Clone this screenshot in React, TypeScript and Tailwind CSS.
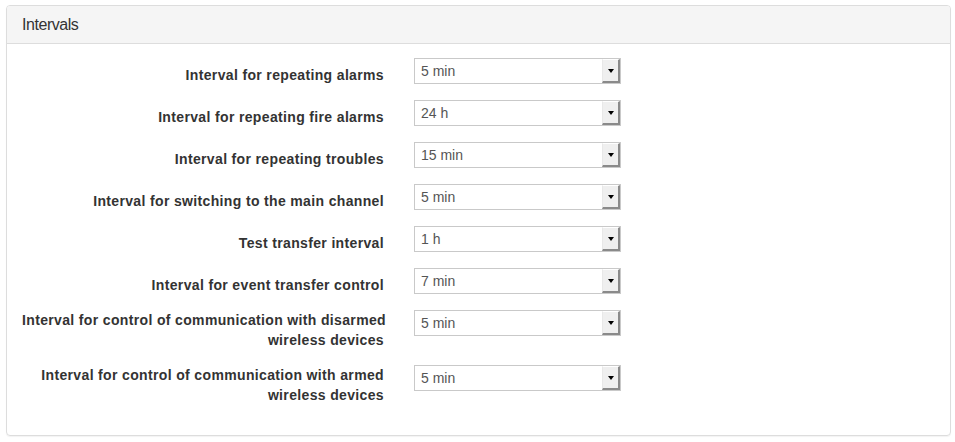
const rows = [
  { label: ["Interval for repeating alarms"], value: "5 min" },
  { label: ["Interval for repeating fire alarms"], value: "24 h" },
  { label: ["Interval for repeating troubles"], value: "15 min" },
  { label: ["Interval for switching to the main channel"], value: "5 min" },
  { label: ["Test transfer interval"], value: "1 h" },
  { label: ["Interval for event transfer control"], value: "7 min" },
  {
    label: ["Interval for control of communication with disarmed", "wireless devices"],
    value: "5 min",
  },
  {
    label: ["Interval for control of communication with armed", "wireless devices"],
    value: "5 min",
  },
];

function FakeSelect({ value }: { value: string }) {
  return (
    <div className="relative h-[26px] w-[207px] border border-[#c9c9c9] bg-white">
      <span className="block pl-[6px] text-[14px] leading-[24px] text-[#555]">{value}</span>
      <span className="absolute right-0 top-0 bottom-0 flex w-[18px] items-center justify-center border-t border-l border-t-white border-l-[#e8e8e8] border-r-2 border-b-2 border-r-[#8a8a8a] border-b-[#8a8a8a] bg-[#efefef]">
        <span className="h-0 w-0 border-x-[3.5px] border-t-[4px] border-x-transparent border-t-black" />
      </span>
    </div>
  );
}

export default function App() {
  return (
    <div className="min-h-[442px] bg-white pl-[6px] pr-[4px] pt-[5px] font-['Liberation_Sans',Arial,sans-serif] text-[#333]">
      <div className="rounded-[4px] border border-[#ddd] shadow-[0_1px_1px_rgba(0,0,0,0.05)]">
        <div className="rounded-t-[3px] border-b border-[#ddd] bg-[#f5f5f5] px-[15px] py-[10px]">
          <h3 className="text-[16px] leading-[17px] tracking-[-0.45px] text-[#333]">Intervals</h3>
        </div>
        <div className="px-[15px] pt-[14px] pb-[15px]">
          <div className="-mx-[15px] flex flex-col">
            {rows.map((row) => (
              <div key={row.label.join(" ")} className="mb-[15px] flex">
                <label
                  className={`w-[392px] shrink-0 whitespace-nowrap px-[15px] text-right text-[14px] font-bold leading-[20px] tracking-[0.35px] ${
                    row.label.length > 1 ? "pt-0" : "pt-[7px]"
                  }`}
                >
                  {row.label.map((line) => (
                    <span key={line} className="block">
                      {line}
                    </span>
                  ))}
                </label>
                <div className="px-[15px]">
                  <FakeSelect value={row.value} />
                </div>
              </div>
            ))}
          </div>
        </div>
      </div>
    </div>
  );
}
